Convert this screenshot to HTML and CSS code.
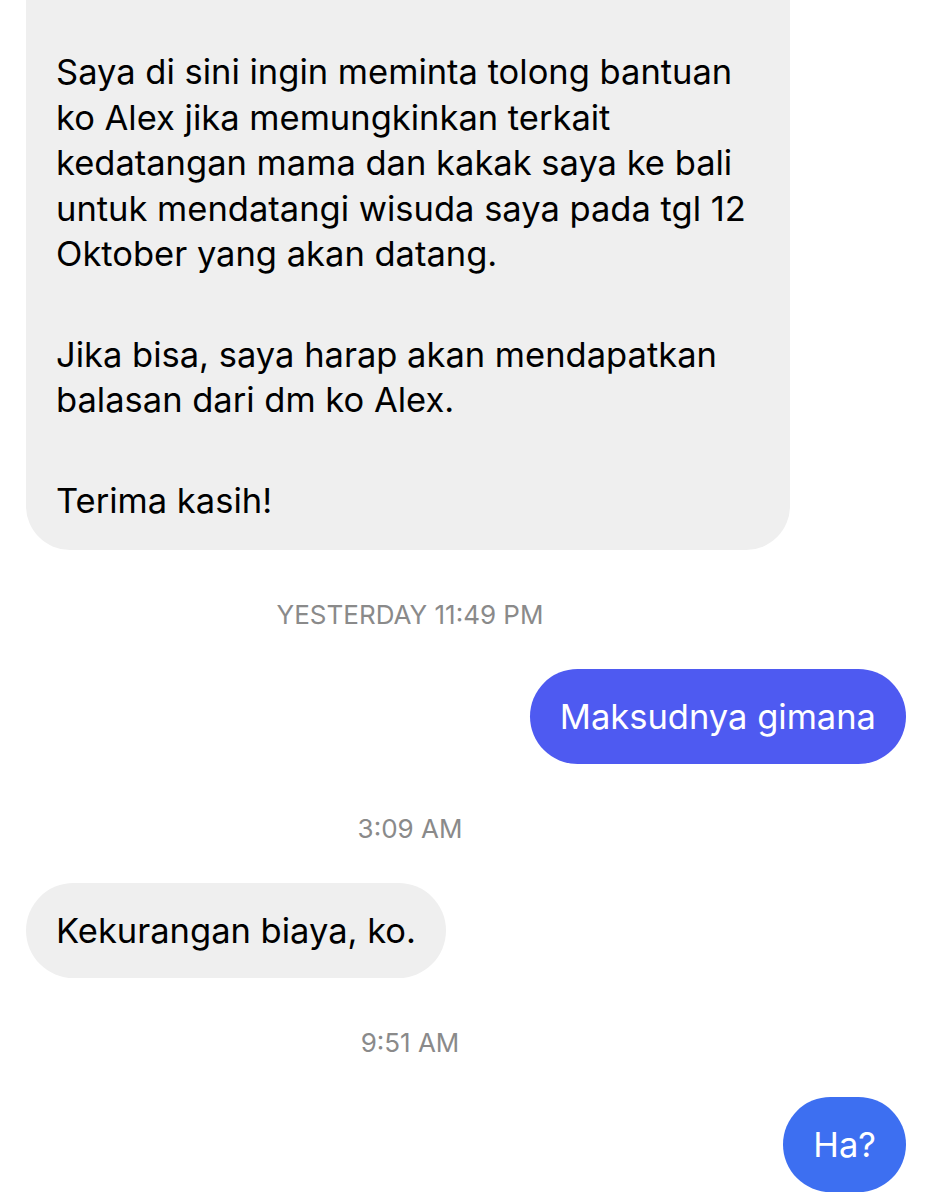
FILE: index.html
```html
<!DOCTYPE html>
<html lang="id">
<head>
<meta charset="utf-8">
<title>Chat</title>
<link rel="stylesheet" href="styles.css">
</head>
<body>
<main class="thread">
  <div class="row row-in">
    <div class="bubble bubble-in bubble-long">
      <p>Saya di sini ingin meminta tolong bantuan ko Alex jika memungkinkan terkait kedatangan mama dan kakak saya ke bali untuk mendatangi wisuda saya pada tgl 12 Oktober yang akan datang.</p>
      <p>Jika bisa, saya harap akan mendapatkan balasan dari dm ko Alex.</p>
      <p>Terima kasih!</p>
    </div>
  </div>

  <div class="stamp">YESTERDAY 11:49 PM</div>

  <div class="row row-out">
    <div class="bubble bubble-out bubble-violet">Maksudnya gimana</div>
  </div>

  <div class="stamp">3:09 AM</div>

  <div class="row row-in">
    <div class="bubble bubble-in">Kekurangan biaya, ko.</div>
  </div>

  <div class="stamp">9:51 AM</div>

  <div class="row row-out">
    <div class="bubble bubble-out bubble-blue">Ha?</div>
  </div>
</main>
</body>
</html>
```

FILE: styles.css
```css
* {
  box-sizing: border-box;
}

html, body {
  margin: 0;
  padding: 0;
  background: #ffffff;
}

body {
  font-family: Inter, "Noto Sans", "Liberation Sans", sans-serif;
  color: #000000;
  overflow: hidden;
}

.thread {
  display: flex;
  flex-direction: column;
  padding: 0 20px 0 26px;
}

.row {
  display: flex;
}

.row-in {
  justify-content: flex-start;
}

.row-out {
  justify-content: flex-end;
}

.bubble {
  font-size: 34.5px;
  line-height: 45px;
  padding: 25px 30px;
  border-radius: 48px;
}

.bubble-in {
  background: #efefef;
  color: #000000;
}

.bubble-out {
  color: #ffffff;
}

.bubble-violet {
  background: #4e5af1;
}

.bubble-blue {
  background: #3d6ff1;
}

.bubble-long {
  width: 764px;
  margin-top: -40px;
  padding: 89px 20px 27px 30px;
  border-radius: 0 0 44px 44px;
}

.bubble-long p {
  margin: 0;
  line-height: 45.5px;
}

.bubble-long p + p {
  margin-top: 55px;
}

.stamp {
  align-self: center;
  margin: 50px 112px 39px 0;
  font-size: 26px;
  line-height: 30px;
  color: #8a8a8a;
}
```
